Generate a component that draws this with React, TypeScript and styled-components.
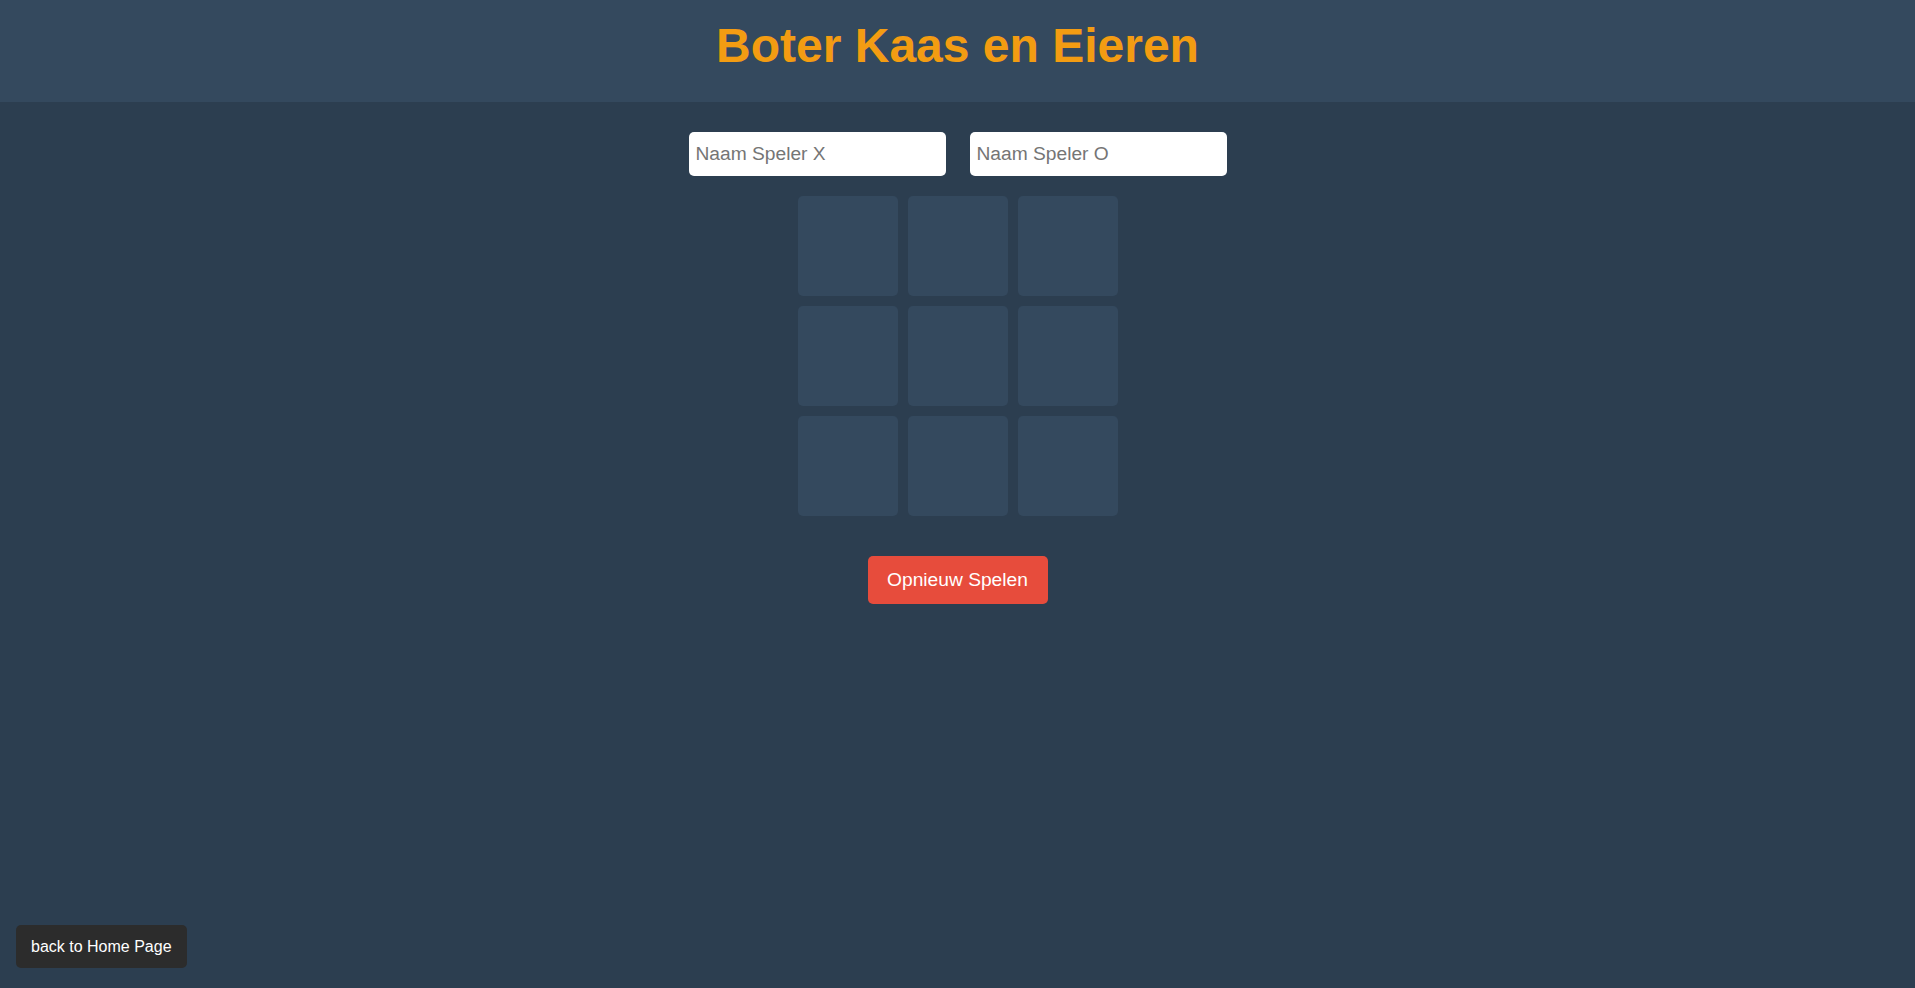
import React, { useState } from "react";
import styled, { createGlobalStyle } from "styled-components";

const GlobalStyle = createGlobalStyle`
  * {
    box-sizing: border-box;
  }
  html,
  body {
    margin: 0;
    padding: 0;
    min-height: 100%;
    background-color: #2c3e50;
    font-family: "Liberation Sans", Arial, sans-serif;
  }
`;

const Header = styled.header`
  height: 102px;
  padding-top: 18px;
  background-color: #34495e;
  display: flex;
  justify-content: center;
  align-items: flex-start;
`;

const Title = styled.h1`
  margin: 0;
  font-size: 48px;
  font-weight: bold;
  color: #f39c12;
`;

const Main = styled.main`
  display: flex;
  flex-direction: column;
  align-items: center;
  padding-top: 30px;
`;

const Players = styled.div`
  display: flex;
  gap: 24px;
  margin-bottom: 20px;
`;

const NameInput = styled.input`
  width: 257px;
  height: 44px;
  padding: 0 7px;
  border: none;
  border-radius: 5px;
  background: #fff;
  font-family: "Liberation Sans", Arial, sans-serif;
  font-size: 19.2px;
  color: #222;
  outline: none;

  &::placeholder {
    color: #757575;
  }
`;

const Board = styled.div`
  display: grid;
  grid-template-columns: repeat(3, 100px);
  grid-auto-rows: 100px;
  gap: 10px;
`;

const Cell = styled.button<{ $filled: boolean }>`
  border: none;
  border-radius: 5px;
  background-color: #34495e;
  color: ${({ $filled }) => ($filled ? "#ecf0f1" : "transparent")};
  font-family: "Liberation Sans", Arial, sans-serif;
  font-size: 48px;
  font-weight: bold;
  cursor: pointer;
`;

const ResetButton = styled.button`
  margin-top: 40px;
  width: 180px;
  height: 48px;
  border: none;
  border-radius: 5px;
  background-color: #e74c3c;
  color: #fff;
  font-family: "Liberation Sans", Arial, sans-serif;
  font-size: 19.2px;
  cursor: pointer;
`;

// floats over the page in the lower left corner
const HomeButton = styled.button`
  position: fixed;
  left: 16px;
  bottom: 20px;
  height: 43px;
  padding: 0 15px;
  border: none;
  border-radius: 5px;
  background-color: #2c2c2c;
  color: #fff;
  font-family: "Liberation Sans", Arial, sans-serif;
  font-size: 16px;
  cursor: pointer;
`;

const App = () => {
  const [cells, setCells] = useState<string[]>(Array(9).fill(""));
  const [turn, setTurn] = useState<"X" | "O">("X");
  const [nameX, setNameX] = useState("");
  const [nameO, setNameO] = useState("");

  const play = (i: number) => {
    if (cells[i]) return;
    const next = [...cells];
    next[i] = turn;
    setCells(next);
    setTurn(turn === "X" ? "O" : "X");
  };

  const reset = () => {
    setCells(Array(9).fill(""));
    setTurn("X");
  };

  return (
    <>
      <GlobalStyle />
      <Header>
        <Title>Boter Kaas en Eieren</Title>
      </Header>

      <Main>
        <Players>
          <NameInput placeholder="Naam Speler X" value={nameX} onChange={(e) => setNameX(e.target.value)} />
          <NameInput placeholder="Naam Speler O" value={nameO} onChange={(e) => setNameO(e.target.value)} />
        </Players>

        <Board>
          {cells.map((c, i) => (
            <Cell key={i} $filled={!!c} onClick={() => play(i)}>
              {c}
            </Cell>
          ))}
        </Board>

        <ResetButton onClick={reset}>Opnieuw Spelen</ResetButton>
      </Main>

      <HomeButton>back to Home Page</HomeButton>
    </>
  );
};

export default App;
